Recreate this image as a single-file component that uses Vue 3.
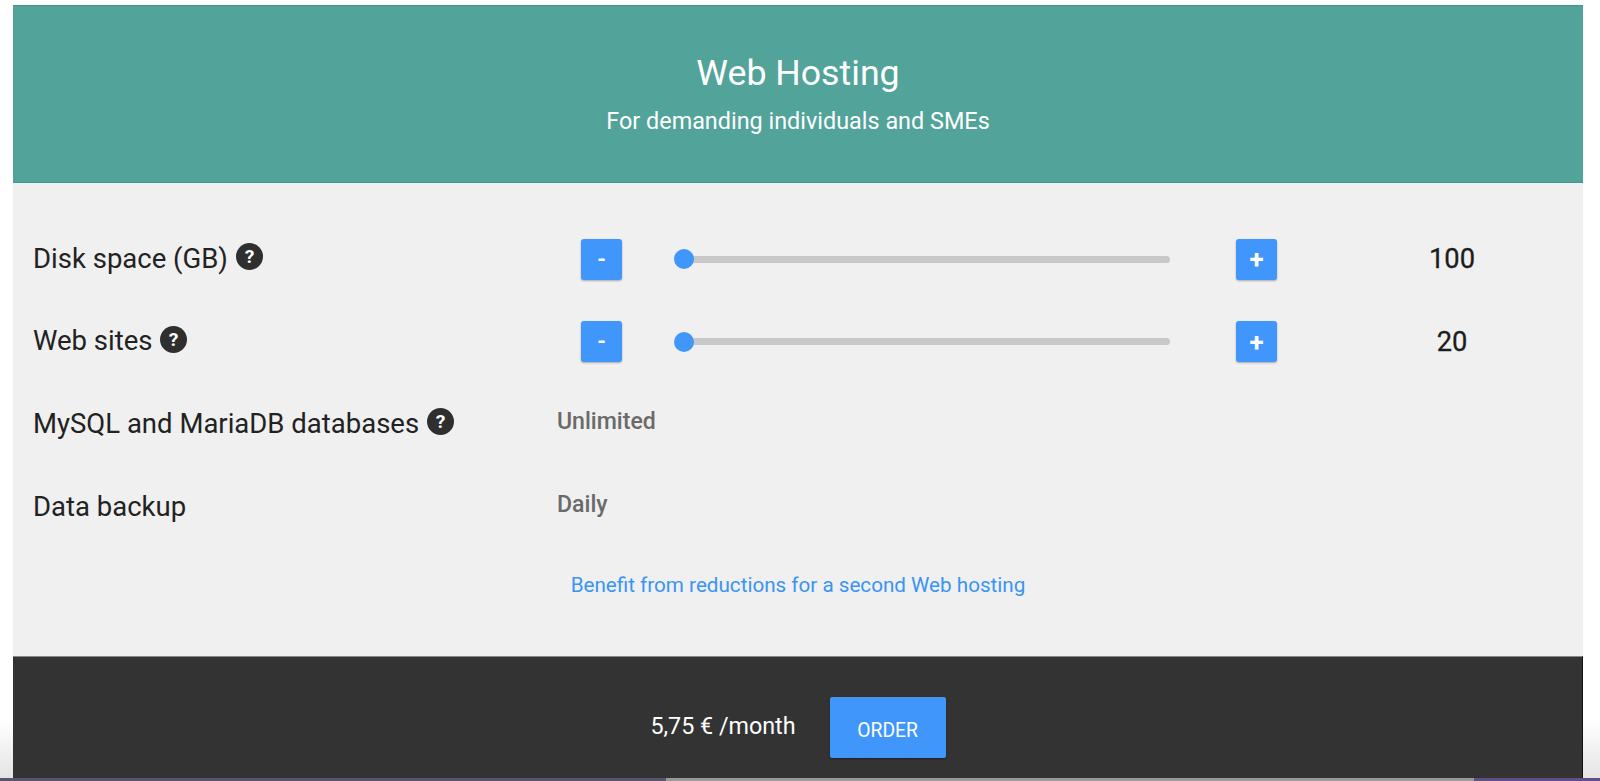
<script setup>
const sliders = [
  { label: 'Disk space (GB)', value: 100 },
  { label: 'Web sites', value: 20 }
]
const infos = [
  { label: 'MySQL and MariaDB databases', value: 'Unlimited', help: true },
  { label: 'Data backup', value: 'Daily', help: false }
]
</script>

<template>
  <div class="page">
    <main class="card">
      <header class="head">
        <h1>Web Hosting</h1>
        <p>For demanding individuals and SMEs</p>
      </header>
      <section class="body">
        <div v-for="s in sliders" :key="s.label" class="row">
          <div class="label">
            <span class="text">{{ s.label }}</span>
            <svg class="help" viewBox="0 0 28 28" aria-hidden="true">
              <circle cx="14" cy="14" r="14" fill="#2f2f2f" />
              <text x="14" y="21" text-anchor="middle" class="q">?</text>
            </svg>
          </div>
          <div class="control">
            <button class="step minus">-</button>
            <div class="slider"><span class="thumb"></span></div>
            <button class="step plus">+</button>
            <div class="value">{{ s.value }}</div>
          </div>
        </div>
        <div v-for="i in infos" :key="i.label" class="row">
          <div class="label">
            <span class="text">{{ i.label }}</span>
            <svg v-if="i.help" class="help" viewBox="0 0 28 28" aria-hidden="true">
              <circle cx="14" cy="14" r="14" fill="#2f2f2f" />
              <text x="14" y="21" text-anchor="middle" class="q">?</text>
            </svg>
          </div>
          <div class="info">{{ i.value }}</div>
        </div>
        <a class="link">Benefit from reductions for a second Web hosting</a>
      </section>
      <footer class="foot">
        <span class="price">5,75 € /month</span>
        <button class="order">ORDER</button>
      </footer>
    </main>
    <div class="strip">
      <span class="s1"></span><span class="s2"></span><span class="s3"></span>
    </div>
  </div>
</template>

<style>
html, body { margin: 0; background: #fff; overflow: hidden; }
</style>

<style scoped>
.page {
  height: 781px;
  display: flex;
  flex-direction: column;
  font-family: Roboto, "Liberation Sans", sans-serif;
  background: linear-gradient(#fff 720px, #e4e4e4 778px);
}
.card {
  margin: 5px 17px 0 13px;
  flex: 1;
  min-height: 0;
  display: flex;
  flex-direction: column;
}
.head {
  height: 178px;
  box-sizing: border-box;
  background: #52a39a;
  border-top: 1px solid #3f968c;
  border-bottom: 1px solid #3f968c;
  color: #fff;
  text-align: center;
  padding-top: 44px;
}
h1 {
  margin: 0;
  font-size: 35.7px;
  line-height: 46px;
  font-weight: 400;
}
.head p {
  margin: 11px 0 0;
  font-size: 23.4px;
  line-height: 28px;
}
.body {
  height: 473px;
  box-sizing: border-box;
  background: #f0f0f0;
  padding: 35px 0 0 20px;
  display: flex;
  flex-direction: column;
}
.row {
  height: 82.6px;
  display: flex;
  align-items: center;
}
.label {
  width: 524px;
  display: flex;
  align-items: center;
  gap: 8px;
  font-size: 27.5px;
  color: #222;
}
.text { margin-top: -2px; }
.help { width: 27px; height: 27px; margin-top: -5px; }
.q { font: 700 20px Roboto, sans-serif; fill: #fff; }
.control { display: flex; align-items: center; margin-left: 24px; }
.step {
  width: 41px;
  height: 41px;
  padding: 0;
  border: 0;
  border-radius: 3px;
  background: #4096fb;
  color: #fff;
  box-shadow: 0 1px 2px rgba(0,0,0,.3);
}
.minus { font: 700 22px Roboto, sans-serif; }
.plus { font: 700 26px Roboto, sans-serif; }
.slider {
  position: relative;
  width: 495px;
  height: 7px;
  margin: 0 66px 0 53px;
  background: #c8c8c8;
  border-radius: 4px;
}
.thumb {
  position: absolute;
  left: -1px;
  top: -6.5px;
  width: 20px;
  height: 20px;
  border-radius: 50%;
  background: #4096fb;
}
.value {
  width: 100px;
  margin-left: 125px;
  text-align: center;
  font-size: 27.3px;
  font-weight: 400;
  color: #1c1c1c;
  -webkit-text-stroke: 0.3px #1c1c1c;
}
.info {
  font-size: 23.1px;
  font-weight: 500;
  color: #6a6a6a;
  margin-top: -5px;
}
.link {
  margin-top: 25px;
  text-align: center;
  font-size: 20.65px;
  color: #3a94f5;
  padding-right: 20px;
}
.foot {
  flex: 1;
  background: #333;
  border-top: 1px solid #888;
  border-right: 1px solid #111;
  display: flex;
  align-items: center;
  justify-content: center;
  gap: 34px;
  padding: 20px 0 0 1px;
  box-sizing: border-box;
}
.price { font-size: 23.3px; color: #fff; margin-top: -3px; }
.order {
  width: 116px;
  height: 61px;
  border: 0;
  border-radius: 2px;
  background: #4096fb;
  color: #fff;
  font: 400 19.3px Roboto, sans-serif;
  padding: 6px 0 0;
  box-shadow: 0 1px 2px rgba(0,0,0,.4);
}
.strip { height: 3px; display: flex; }
.s1 { width: 666px; background: #5a5470; }
.s2 { width: 808px; background: #9a9a9a; }
.s3 { flex: 1; background: #5f4f86; }
</style>
